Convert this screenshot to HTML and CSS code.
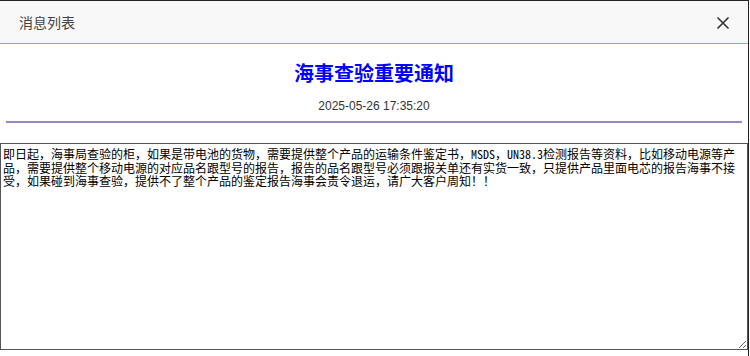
FILE: index.html
```html
<!DOCTYPE html>
<html>
<head>
	<meta charset="utf-8">
	<title>消息列表</title>
	<link rel="stylesheet" href="styles.css">
</head>
<body>
	<div class="dialog">
		<div class="dialog_header">
			<span class="dialog_title">消息列表</span>
			<span class="dialog_close">
				<svg width="14" height="14" viewBox="0 0 14 14">
					<path d="M1.5 1.5 L12.5 12.5 M12.5 1.5 L1.5 12.5" stroke="#333" stroke-width="1.6" fill="none"/>
				</svg>
			</span>
		</div>
		<div class="notice">
			<h2 class="notice_title">海事查验重要通知</h2>
			<p class="notice_time">2025-05-26 17:35:20</p>
		</div>
		<textarea class="notice_content" readonly>即日起，海事局查验的柜，如果是带电池的货物，需要提供整个产品的运输条件鉴定书，MSDS，UN38.3检测报告等资料，比如移动电源等产品，需要提供整个移动电源的对应品名跟型号的报告，报告的品名跟型号必须跟报关单还有实货一致，只提供产品里面电芯的报告海事不接受，如果碰到海事查验，提供不了整个产品的鉴定报告海事会责令退运，请广大客户周知！！</textarea>
	</div>
</body>
</html>
```

FILE: styles.css
```css
* {
	margin: 0;
	padding: 0;
	box-sizing: border-box;
}
body {
	font-family: "Liberation Sans", "Noto Sans CJK SC", sans-serif;
	background: #fff;
}
.dialog {
	width: 749px;
	height: 356px;
	border-top: 1px solid #222;
	border-right: 1px solid #222;
	background: #fff;
}
.dialog_header {
	display: flex;
	align-items: center;
	justify-content: space-between;
	height: 43px;
	padding: 0 18px 0 19px;
	background: #f8f8f8;
	border-bottom: 1px solid #6cb1e0;
}
.dialog_title {
	font-size: 14px;
	color: #444;
}
.dialog_close {
	display: flex;
	padding-top: 2px;
}
.notice {
	margin: 0 6px;
	padding: 16px 0 7px;
	border-bottom: 2px solid #9b85c4;
	text-align: center;
}
.notice_title {
	font-size: 20px;
	line-height: 28px;
	font-weight: bold;
	color: #0000ff;
}
.notice_time {
	margin-top: 10px;
	font-size: 12px;
	line-height: 16px;
	color: #333;
}
.notice_content {
	display: block;
	width: 748px;
	height: 207px;
	margin-top: 20px;
	padding: 3px 2px 2px;
	border: 1px solid #555;
	font-family: "Noto Sans Mono CJK SC", "Liberation Mono", "Noto Sans CJK SC", monospace;
	font-size: 12px;
	line-height: 13.5px;
	color: #000;
	resize: both;
	outline: none;
}
```
